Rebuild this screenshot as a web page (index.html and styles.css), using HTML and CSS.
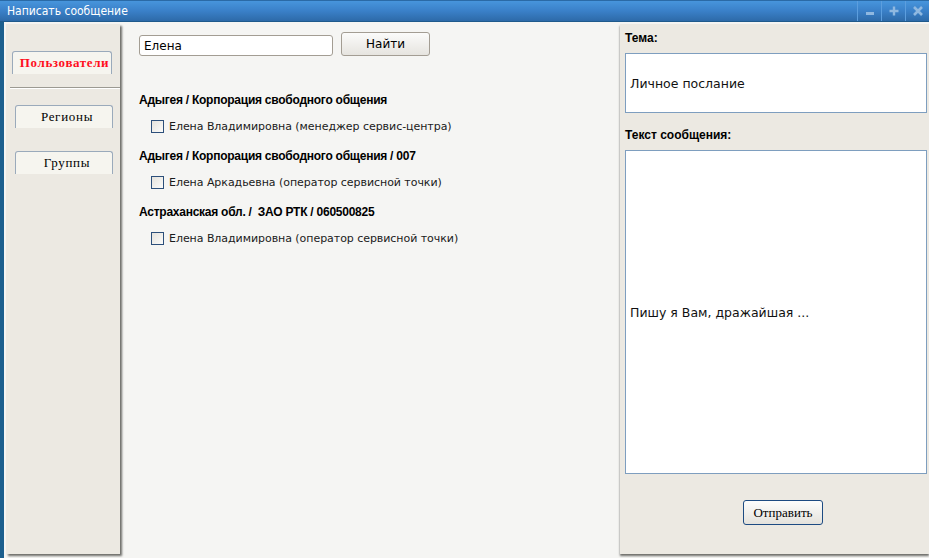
FILE: index.html
```html
<!DOCTYPE html>
<html lang="ru">

<head>
    <meta charset="UTF-8">
    <meta name="viewport" content="width=device-width, initial-scale=1.0">
    <title>Написать сообщение</title>
    <link rel="stylesheet" href="styles.css">
</head>

<body>
    <div class="window">
        <div class="title_bar">
            <span class="title">Написать сообщение</span>
            <div class="win_buttons">
                <span class="win_btn">
                    <svg width="10" height="10" viewBox="0 0 10 10"><rect x="1" y="6" width="8" height="3" fill="#8fb8e0"/></svg>
                </span>
                <span class="win_btn">
                    <svg width="10" height="10" viewBox="0 0 10 10"><path d="M3.8 0.5h2.4v3.3h3.3v2.4h-3.3v3.3h-2.4v-3.3h-3.3v-2.4h3.3z" fill="#8fb8e0"/></svg>
                </span>
                <span class="win_btn">
                    <svg width="10" height="10" viewBox="0 0 10 10"><path d="M1 1L9 9M9 1L1 9" stroke="#8fb8e0" stroke-width="2.6"/></svg>
                </span>
            </div>
        </div>
        <div class="content">
            <div class="sidebar">
                <div class="tab tab_active">Пользователи</div>
                <div class="tab_line"></div>
                <div class="tab">Регионы</div>
                <div class="tab">Группы</div>
            </div>
            <div class="main">
                <div class="search">
                    <input type="text" class="search_input" value="Елена">
                    <input type="button" class="search_btn" value="Найти">
                </div>
                <div class="groups">
                    <div class="group_title">Адыгея / Корпорация свободного общения</div>
                    <label class="user"><span class="check"></span>Елена Владимировна (менеджер сервис-центра)</label>
                    <div class="group_title">Адыгея / Корпорация свободного общения / 007</div>
                    <label class="user"><span class="check"></span>Елена Аркадьевна (оператор сервисной точки)</label>
                    <div class="group_title">Астраханская обл. / &nbsp;ЗАО РТК / 060500825</div>
                    <label class="user"><span class="check"></span>Елена Владимировна (оператор сервисной точки)</label>
                </div>
            </div>
            <div class="message">
                <div class="label">Тема:</div>
                <div class="subject">Личное послание</div>
                <div class="label">Текст сообщения:</div>
                <div class="body_text">Пишу я Вам, дражайшая ...</div>
                <div class="send_row">
                    <input type="button" class="send_btn" value="Отправить">
                </div>
            </div>
        </div>
    </div>
</body>

</html>
```

FILE: styles.css
```css
* {
    margin: 0;
    padding: 0;
    box-sizing: border-box;
}

body {
    width: 929px;
    height: 558px;
    overflow: hidden;
    font-family: "DejaVu Sans", sans-serif;
    font-size: 12px;
    color: #111;
}

.window {
    width: 929px;
    height: 558px;
    display: flex;
    flex-direction: column;
    background: #f5f5f3;
    border-left: 4px solid #1c5f8e;
}

.title_bar {
    height: 22px;
    margin-left: -4px;
    display: flex;
    align-items: center;
    justify-content: space-between;
    background: linear-gradient(#4795dc, #3a80c8 50%, #2d6aa8);
    border-top: 1px solid #2a6aa6;
    border-bottom: 1px solid #1f5a8c;
}

.title {
    padding-left: 7px;
    color: #fff;
    font-family: "DejaVu Sans", sans-serif;
    font-stretch: condensed;
    font-size: 12px;
}

.win_buttons {
    display: flex;
    height: 100%;
}

.win_btn {
    width: 24px;
    height: 100%;
    display: flex;
    align-items: center;
    justify-content: center;
    border-left: 1px solid #5c9ede;
}

.content {
    flex: 1;
    display: flex;
    padding-top: 2px;
    padding-bottom: 4px;
}

.sidebar {
    width: 114px;
    margin-left: 2px;
    background: #ece9e2;
    box-shadow: 2px 2px 2px #6e6e6a;
    padding-top: 27px;
}

.tab {
    margin: 0 7px 0 9px;
    padding-left: 6px;
    height: 23px;
    border: 1px solid #9aaabb;
    border-bottom: none;
    border-radius: 3px 3px 0 0;
    background: #f6f5ef;
    font-family: "Liberation Serif", serif;
    font-size: 13px;
    letter-spacing: 0.7px;
    color: #000;
    text-align: center;
    line-height: 22px;
    margin-bottom: 23px;
}

.tab_active {
    margin: 0 8px 0 6px;
    padding-left: 5px;
    color: #ff0f1e;
    font-weight: bold;
    letter-spacing: 0.6px;
    white-space: nowrap;
    margin-bottom: 0;
}

.tab_line {
    margin: 13px 0 16px 4px;
    border-top: 1px solid #9c9a92;
    border-bottom: 1px solid #fff;
}

.main {
    width: 494px;
    margin-left: 4px;
    padding: 8px 0 0 15px;
}

.search {
    display: flex;
    align-items: flex-end;
}

.search_input {
    width: 194px;
    height: 21px;
    border: 1px solid #a39d93;
    border-radius: 3px;
    padding: 0 4px;
    font-family: "DejaVu Sans", sans-serif;
    font-size: 12px;
    color: #000;
    background: #fff;
}

.search_btn {
    width: 89px;
    height: 24px;
    margin-left: 8px;
    border: 1px solid #a39d93;
    border-radius: 3px;
    background: linear-gradient(#fbfbfa, #e6e4df);
    font-family: "DejaVu Sans", sans-serif;
    font-size: 12px;
    color: #000;
}

.groups {
    padding-top: 36px;
}

.group_title {
    font-family: "Liberation Sans", sans-serif;
    font-weight: bold;
    font-size: 12px;
    letter-spacing: -0.25px;
    height: 16px;
    line-height: 16px;
    color: #000;
}

.user {
    display: flex;
    align-items: center;
    height: 20px;
    margin: 8px 0 12px 12px;
    font-size: 11px;
    letter-spacing: -0.05px;
    color: #1a1a1a;
}

.check {
    width: 13px;
    height: 13px;
    margin-right: 5px;
    border: 1px solid #2c4f7a;
    background: linear-gradient(135deg, #e4e2dc, #fbfbfa);
}

.message {
    flex: 1;
    margin-left: 2px;
    background: #ece9e2;
    box-shadow: 0 2px 2px #6e6e6a;
    padding: 7px 2px 0 5px;
}

.label {
    font-family: "Liberation Sans", sans-serif;
    font-weight: bold;
    font-size: 12px;
    height: 21px;
    color: #000;
}

.subject,
.body_text {
    display: flex;
    align-items: center;
    background: #fff;
    border: 1px solid #7e9ebf;
    padding-left: 4px;
    font-size: 12.5px;
    color: #111;
}

.subject {
    height: 60px;
    margin-top: 1px;
    margin-bottom: 15px;
}

.body_text {
    height: 324px;
    margin-top: 1px;
}

.send_row {
    display: flex;
    justify-content: center;
    padding-top: 26px;
    padding-left: 14px;
}

.send_btn {
    width: 80px;
    height: 25px;
    border: 1px solid #1d4b82;
    border-radius: 3px;
    background: linear-gradient(#fdfdfc, #e4e2dc);
    font-family: "Liberation Serif", serif;
    font-size: 13px;
    color: #000;
}
```
